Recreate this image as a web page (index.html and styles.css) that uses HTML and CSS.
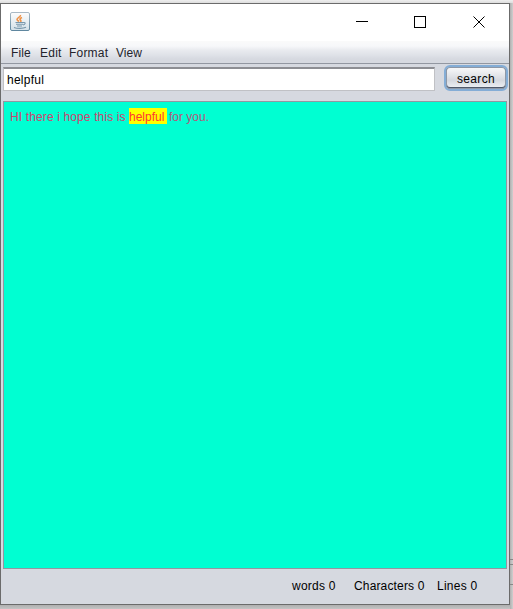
FILE: index.html
```html
<!DOCTYPE html>
<html lang="en">
<head>
<meta charset="utf-8">
<title>Text editor</title>
<link rel="stylesheet" href="styles.css">
</head>
<body>
<div class="window">
  <header class="titlebar">
    <svg class="app-icon" width="20" height="20" viewBox="0 0 20 20">
      <defs><linearGradient id="g" x1="0" y1="0" x2="0" y2="1"><stop offset="0" stop-color="#fdfdfd"/><stop offset="1" stop-color="#d3e0e8"/></linearGradient>
      <linearGradient id="b" x1="0" y1="0" x2="0" y2="1"><stop offset="0" stop-color="#a9b9c5"/><stop offset="1" stop-color="#5f879f"/></linearGradient></defs>
      <rect x=".5" y=".5" width="19" height="18" rx="1.5" fill="url(#g)" stroke="url(#b)"/>
      <path d="M10.500 3c.5 2-3.500 2.600-3.500 4.500 0 1 1.500 1.500 2 2M12 5.500c-2 .8-2.500 1.500-1.500 2.500s.5 1.500 0 2" fill="none" stroke="#ef9146" stroke-width="1.600"/>
      <path d="M5.500 10.500h8M6 12.300h7M7 14h5M13.500 10.500c2.500-.5 2 2-.5 2.500M4 15.500c3 1.200 9 1.200 12-.2" fill="none" stroke="#7897ab" stroke-width="1.100"/>
    </svg>
    <svg class="controls" width="130" height="14" viewBox="0 0 130 14" fill="none" stroke="#000" shape-rendering="crispEdges">
      <path d="M0 6.500h12M58.500 1.500h11v11h-11z"/>
      <path d="M117.500 1.500l11 11M128.500 1.500l-11 11" shape-rendering="auto"/>
    </svg>
  </header>
  <nav class="menubar"><span class="file">File</span><span class="edit">Edit</span><span class="format">Format</span><span>View</span></nav>
  <div class="searchbar">
    <input class="query" type="text" value="helpful" aria-label="Search text">
    <button class="search" type="button">search</button>
  </div>
  <main class="editor"><span class="lead">HI there i hope this is</span><mark>helpful</mark><span class="tail">for you.</span></main>
  <footer class="status"><span class="words">words 0</span><span class="chars">Characters 0</span><span class="lines">Lines 0</span></footer>
</div>
<div class="edge"></div>
</body>
</html>
```
FILE: styles.css
```css
* { box-sizing: border-box; }
body {
  margin: 0;
  width: 513px;
  height: 609px;
  padding-top: 3px;
  overflow: hidden;
  display: flex;
  align-items: flex-start;
  background: linear-gradient(#eee 0, #ddd 3px, #ccc 100px, #c8c8c8 598px, #aaa 604px, #c4c4c4 609px);
  font: 12px/16px "Liberation Sans", Arial, sans-serif;
  color: #000;
}
span, mark { white-space: nowrap; flex: none; }
.window {
  width: 510px;
  height: 602px;
  flex: none;
  display: flex;
  flex-direction: column;
  border: 1px solid #6b6b6b;
  background: #d6d9e0;
}
.titlebar {
  height: 37px;
  flex: none;
  display: flex;
  justify-content: space-between;
  align-items: flex-start;
  padding: 8px 23px 0 9px;
  background: #fff;
}
.controls { margin-top: 3px; }
.menubar {
  height: 23px;
  flex: none;
  display: flex;
  padding: 4px 0 0 10px;
  border-bottom: 1px solid #9297a1;
  background: linear-gradient(#fafafa 0, #f7f8fa 5px, #e9ebef 9px, #dfe2e8 14px, #d6d9e0 18px);
  color: #23232b;
}
.file { width: 29px; letter-spacing: .15px; }
.edit { width: 29px; letter-spacing: .25px; }
.format { width: 47px; letter-spacing: .2px; }
.searchbar {
  height: 37px;
  flex: none;
  display: flex;
  align-items: flex-start;
  padding: 1px 1px 0 2px;
}
.query {
  width: 432px;
  flex: none;
  height: 24px;
  margin: 2px 9px 0 0;
  padding: 0 3px;
  border: 1px solid #c0c1c5;
  border-top: 2px solid #8d8e93;
  border-radius: 0;
  background: #fff;
  font: inherit;
  letter-spacing: .25px;
  color: #000;
}
.search {
  width: 64px;
  flex: none;
  height: 26px;
  padding: 2px 0 0;
  border: 2px solid #84add6;
  border-radius: 6px;
  box-shadow: inset 0 0 0 1px #8e98a7, inset 0 -1px 0 1px #4f596b;
  background: linear-gradient(#fafafb, #e5e7eb 35%, #d5d8df 60%, #f0f3f6);
  font: inherit;
  letter-spacing: .35px;
  color: #000;
}
.editor {
  width: 504px;
  height: 468px;
  flex: none;
  display: flex;
  align-items: flex-start;
  margin-left: 2px;
  padding: 6px;
  border: 1px solid #9297a1;
  background: #00ffd2;
  line-height: 17px;
  color: #ff3366;
}
.lead { width: 119px; letter-spacing: .13px; color: #d0426f; }
mark { width: 38px; height: 16px; background: #ff0; color: #ff3333; }
.tail { margin-left: 2px; color: #b5587c; }
.lead, mark, .tail { padding-top: 0; line-height: 18px; }
.status {
  display: flex;
  padding: 9px 0 0 291px;
  letter-spacing: .25px;
}
.words { width: 62px; }
.chars { width: 83px; letter-spacing: .15px; }
.edge {
  width: 3px;
  height: 606px;
  background:
    linear-gradient(#888, #888) 0 556px / 3px 1px no-repeat,
    linear-gradient(#888, #888) 0 561px / 3px 1px no-repeat,
    linear-gradient(#888, #888) 0 581px / 3px 1px no-repeat,
    linear-gradient(90deg, #b0b0b0, #cfcfcf);
}
```
